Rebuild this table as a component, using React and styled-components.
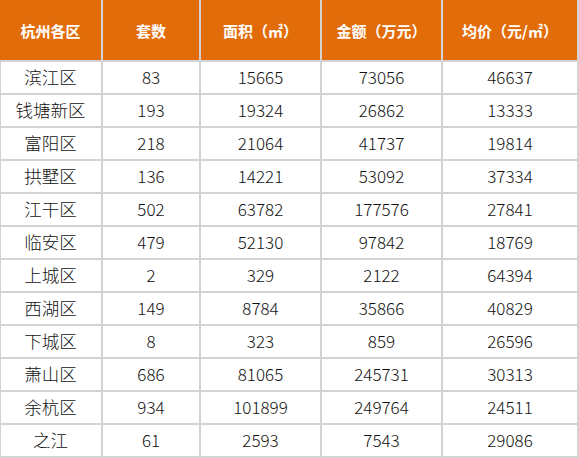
import React from "react";
import styled, { createGlobalStyle } from "styled-components";

const Global = createGlobalStyle`
  html, body { margin: 0; padding: 0; background: #ffffff; }
  body { font-family: "Noto Sans CJK SC", "Noto Sans", sans-serif; }
`;

const Grid = styled.div`
  display: grid;
  grid-template-columns: 101px 96px 119px 119px 134px;
  grid-auto-rows: 31px;
  grid-template-rows: 60px;
  column-gap: 2px;
  row-gap: 2px;
  width: 579px;
  box-sizing: border-box;
  padding: 0 2px 2px 0;
  background: #d3d3d3;
`;

const HeadCell = styled.div`
  background: #e36c0a;
  color: #ffffff;
  font-weight: 700;
  font-size: 15px;
  display: flex;
  align-items: center;
  justify-content: center;
  white-space: nowrap;
`;

const Cell = styled.div`
  background: #ffffff;
  color: #111111;
  font-weight: 300;
  font-size: ${(p) => (p.$name ? "17.5px" : "17px")};
  display: flex;
  align-items: center;
  justify-content: center;
  padding-bottom: 3px;
  box-sizing: border-box;
  white-space: nowrap;
  box-shadow: ${(p) => (p.$first ? "inset 1px 0 0 #d3d3d3" : "none")};
`;

const headers = ["杭州各区", "套数", "面积（㎡）", "金额（万元）", "均价（元/㎡）"];

const rows = [
  ["滨江区", "83", "15665", "73056", "46637"],
  ["钱塘新区", "193", "19324", "26862", "13333"],
  ["富阳区", "218", "21064", "41737", "19814"],
  ["拱墅区", "136", "14221", "53092", "37334"],
  ["江干区", "502", "63782", "177576", "27841"],
  ["临安区", "479", "52130", "97842", "18769"],
  ["上城区", "2", "329", "2122", "64394"],
  ["西湖区", "149", "8784", "35866", "40829"],
  ["下城区", "8", "323", "859", "26596"],
  ["萧山区", "686", "81065", "245731", "30313"],
  ["余杭区", "934", "101899", "249764", "24511"],
  ["之江", "61", "2593", "7543", "29086"],
];

export default function App() {
  return (
    <>
      <Global />
      <Grid>
        {headers.map((h) => (
          <HeadCell key={h}>{h}</HeadCell>
        ))}
        {rows.map((r) =>
          r.map((v, i) => (
            <Cell key={r[0] + i} $first={i === 0} $name={i === 0}>
              {v}
            </Cell>
          ))
        )}
      </Grid>
    </>
  );
}
